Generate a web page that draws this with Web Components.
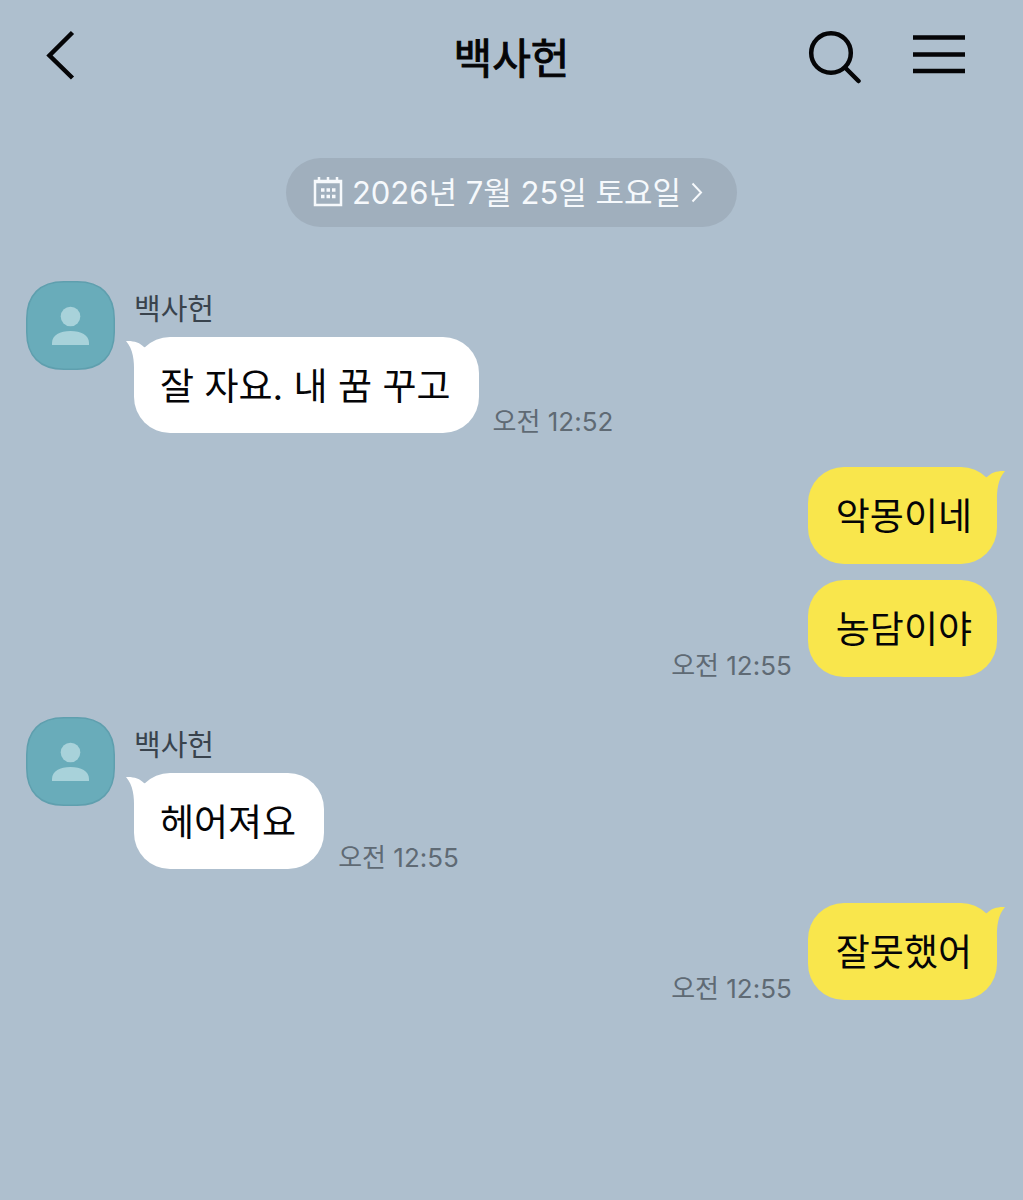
<!DOCTYPE html>
<html lang="ko">
<head>
<meta charset="utf-8">
<meta name="viewport" content="width=device-width, initial-scale=1">
<title>백사헌</title>
<style>
  body {
    margin: 0;
    background: #aebfce;
    color: #050507;
    font-family: Inter, "Noto Sans CJK KR", sans-serif;
  }
</style>
</head>
<body>
<chat-room>
  <chat-header slot="header">백사헌</chat-header>
  <chat-date>2026년 7월 25일 토요일</chat-date>
  <chat-group name="백사헌">
    <chat-message time="오전 12:52" tail>잘 자요. 내 꿈 꾸고</chat-message>
  </chat-group>
  <chat-group mine>
    <chat-message mine tail>악몽이네</chat-message>
    <chat-message mine time="오전 12:55">농담이야</chat-message>
  </chat-group>
  <chat-group name="백사헌">
    <chat-message time="오전 12:55" tail>헤어져요</chat-message>
  </chat-group>
  <chat-group mine>
    <chat-message mine time="오전 12:55" tail>잘못했어</chat-message>
  </chat-group>
</chat-room>

<script>
const define = (name, html, setup) => {
  const templateElement = document.createElement("template");
  templateElement.innerHTML = html;

  window.customElements.define(
    name,
    class extends HTMLElement {
      constructor() {
        super();
        this.attachShadow({ mode: "open" });
      }

      connectedCallback() {
        if (this.shadowRoot.firstChild) return;
        this.shadowRoot.appendChild(templateElement.content.cloneNode(true));
        if (setup) setup(this, this.shadowRoot);
      }
    }
  );
};

define("chat-room", `
<style>
  :host {
    display: flex;
    flex-direction: column;
    min-height: 100vh;
    box-sizing: border-box;
  }
  main {
    display: flex;
    flex-direction: column;
    padding: 46px 26px;
  }
</style>

<slot name="header"></slot>
<main><slot></slot></main>
`);

define("chat-header", `
<style>
  :host {
    display: grid;
    grid-template-columns: 1fr auto 1fr;
    align-items: center;
    height: 112px;
    padding: 0 58px 0 44px;
  }
  h1 {
    margin: 0;
    padding: 6px 0 0 14px;
    font-size: 42px;
    font-weight: 400;
    line-height: 56px;
    -webkit-text-stroke: 1px currentColor;
  }
  button {
    display: block;
    padding: 0;
    border: 0;
    background: none;
    color: inherit;
    cursor: pointer;
  }
  svg {
    display: block;
    fill: none;
    stroke: currentColor;
  }
  nav {
    display: flex;
    justify-content: flex-end;
    gap: 50px;
  }
</style>

<button class="back" aria-label="뒤로">
  <svg width="34" height="56" stroke-width="4.5"><path d="M28.5 4.5 5.5 27.5 28.5 50"/></svg>
</button>
<h1><slot></slot></h1>
<nav>
  <button aria-label="검색">
    <svg width="56" height="56" stroke-width="4.5" stroke-linecap="round"><circle cx="24" cy="25" r="19.8"/><path d="M38 39.5 51.5 53"/></svg>
  </button>
  <button aria-label="메뉴">
    <svg width="52" height="56" stroke-width="4.5"><path d="M0 9.5H52M0 26.5H52M0 43H52"/></svg>
  </button>
</nav>
`);

define("chat-date", `
<style>
  :host {
    display: flex;
    justify-content: center;
    margin-bottom: 54px;
  }
  button {
    display: flex;
    align-items: center;
    height: 69px;
    padding: 0 34px 0 27px;
    border: 0;
    border-radius: 35px;
    background: #a0afbd;
    color: #f6f9fc;
    font: inherit;
    font-size: 31px;
    line-height: 40px;
    cursor: pointer;
  }
  svg {
    flex: none;
    fill: none;
    stroke: currentColor;
  }
  .label {
    margin: 0 10px 0 9px;
  }
</style>

<button>
  <svg width="30" height="34" stroke-width="2.5">
    <path d="M2 5H28V29H2ZM2 6H28M6 1V5M15 1V5M24 1V5"/>
    <path d="M8 14H23M8 20.5H23" stroke-width="3.5" stroke-dasharray="3.5 2"/>
  </svg>
  <span class="label"><slot></slot></span>
  <svg width="12" height="22" stroke-width="2"><path d="M1.5 1.5 10 10.5 1.5 19.5"/></svg>
</button>
`);

define("chat-avatar", `
<style>
  :host {
    display: block;
    flex: none;
  }
  svg {
    display: block;
  }
</style>

<svg width="89" height="89" viewBox="0 0 89 89">
  <path d="M.75 38C.75 14 14 .75 38 .75H51C75 .75 88.25 14 88.25 38V51C88.25 75 75 88.25 51 88.25H38C14 88.25 .75 75 .75 51Z" fill="#69acba" stroke="#5f9fae" stroke-width="1.5"/>
  <g fill="#a8d2da">
    <circle cx="44.5" cy="35.5" r="9.8"/>
    <path d="M26 64V62C26 54 34 50 44.5 50S63 54 63 62V64Z"/>
  </g>
</svg>
`);

define("chat-group", `
<style>
  :host {
    display: flex;
    gap: 19px;
    margin-bottom: 34px;
  }
  :host([mine]) {
    margin-bottom: 40px;
  }
  :host([mine]) chat-avatar,
  :host([mine]) .name {
    display: none;
  }
  .body {
    flex: 1;
    min-width: 0;
  }
  .name {
    height: 56px;
    color: #39434d;
    font-size: 29px;
    line-height: 58px;
  }
  .messages {
    display: flex;
    flex-direction: column;
    gap: 16px;
  }
</style>

<chat-avatar></chat-avatar>
<div class="body">
  <div class="name"></div>
  <div class="messages"><slot></slot></div>
</div>
`, (host, root) => {
  root.querySelector(".name").textContent = host.getAttribute("name") ?? "";
});

define("chat-message", `
<style>
  :host {
    display: flex;
    align-items: flex-end;
    gap: 14px;
  }
  :host([mine]) {
    flex-direction: row-reverse;
    gap: 16px;
  }
  .bubble {
    position: relative;
    padding: 24px 28px 20px 26px;
    border-radius: 36px;
    background: var(--bubble);
    font-size: 37px;
    line-height: 52px;
    --bubble: #fff;
  }
  :host([mine]) .bubble {
    padding: 24px 25px 21px 28px;
    --bubble: #f9e64c;
  }
  .tail {
    display: none;
    position: absolute;
    top: 3px;
    left: -8px;
    fill: var(--bubble);
  }
  :host([tail]) .tail {
    display: block;
  }
  :host([mine]) .tail {
    right: -8px;
    left: auto;
    transform: scaleX(-1);
  }
  time {
    color: #5f6a74;
    font-size: 26px;
    line-height: 22px;
    white-space: nowrap;
  }
</style>

<div class="bubble">
  <svg class="tail" width="30" height="34" aria-hidden="true"><path d="M0 1C7 .5 14 2.5 18 7L30 14 20 34H8C8.5 20 7 9 0 1Z"/></svg>
  <slot></slot>
</div>
<time></time>
`, (host, root) => {
  root.querySelector("time").textContent = host.getAttribute("time") ?? "";
});
</script>
</body>
</html>
